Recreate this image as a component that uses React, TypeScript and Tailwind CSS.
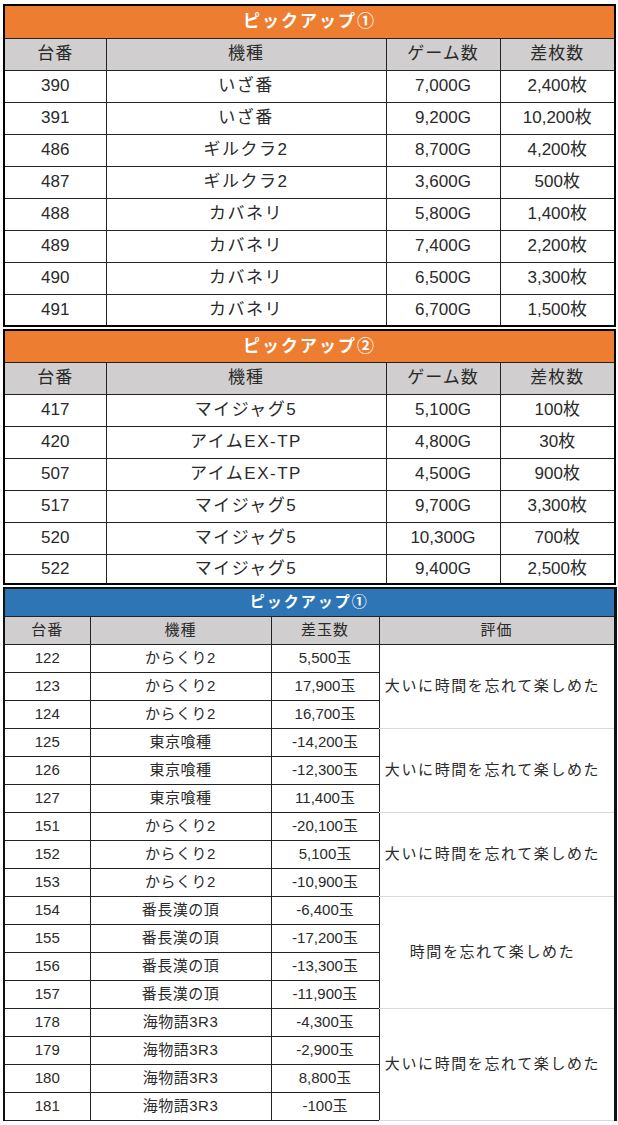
import React from 'react';

const font = { fontFamily: '"Liberation Sans", "Noto Sans CJK JP", sans-serif' };

type SlotRow = [string, string, string, string];

const pick1: SlotRow[] = [
  ['390', 'いざ番', '7,000G', '2,400枚'],
  ['391', 'いざ番', '9,200G', '10,200枚'],
  ['486', 'ギルクラ2', '8,700G', '4,200枚'],
  ['487', 'ギルクラ2', '3,600G', '500枚'],
  ['488', 'カバネリ', '5,800G', '1,400枚'],
  ['489', 'カバネリ', '7,400G', '2,200枚'],
  ['490', 'カバネリ', '6,500G', '3,300枚'],
  ['491', 'カバネリ', '6,700G', '1,500枚'],
];

const pick2: SlotRow[] = [
  ['417', 'マイジャグ5', '5,100G', '100枚'],
  ['420', 'アイムEX-TP', '4,800G', '30枚'],
  ['507', 'アイムEX-TP', '4,500G', '900枚'],
  ['517', 'マイジャグ5', '9,700G', '3,300枚'],
  ['520', 'マイジャグ5', '10,300G', '700枚'],
  ['522', 'マイジャグ5', '9,400G', '2,500枚'],
];

const pachiGroups: { rows: [string, string, string][]; note: string }[] = [
  {
    rows: [
      ['122', 'からくり2', '5,500玉'],
      ['123', 'からくり2', '17,900玉'],
      ['124', 'からくり2', '16,700玉'],
    ],
    note: '大いに時間を忘れて楽しめた',
  },
  {
    rows: [
      ['125', '東京喰種', '-14,200玉'],
      ['126', '東京喰種', '-12,300玉'],
      ['127', '東京喰種', '11,400玉'],
    ],
    note: '大いに時間を忘れて楽しめた',
  },
  {
    rows: [
      ['151', 'からくり2', '-20,100玉'],
      ['152', 'からくり2', '5,100玉'],
      ['153', 'からくり2', '-10,900玉'],
    ],
    note: '大いに時間を忘れて楽しめた',
  },
  {
    rows: [
      ['154', '番長漢の頂', '-6,400玉'],
      ['155', '番長漢の頂', '-17,200玉'],
      ['156', '番長漢の頂', '-13,300玉'],
      ['157', '番長漢の頂', '-11,900玉'],
    ],
    note: '時間を忘れて楽しめた',
  },
  {
    rows: [
      ['178', '海物語3R3', '-4,300玉'],
      ['179', '海物語3R3', '-2,900玉'],
      ['180', '海物語3R3', '8,800玉'],
      ['181', '海物語3R3', '-100玉'],
    ],
    note: '大いに時間を忘れて楽しめた',
  },
];

function SlotTable({
  title,
  rows,
  titleH,
  lastH,
}: {
  title: string;
  rows: SlotRow[];
  titleH: string;
  lastH: string;
}) {
  const cell = 'border border-[#222] text-center p-0';
  return (
    <table className="w-[611px] table-fixed border-collapse border-2 border-black text-[17px] text-[#2a2a2a]">
      <colgroup>
        <col className="w-[102px]" />
        <col className="w-[280px]" />
        <col className="w-[114px]" />
        <col className="w-[115px]" />
      </colgroup>
      <tbody>
        <tr className={titleH + ' bg-[#ED7D31]'}>
          <td colSpan={4} className="border border-[#222] p-0 text-center text-[17px] font-bold tracking-[2px] text-white">
            {title}
          </td>
        </tr>
        <tr className="h-[32px] bg-[#D0CECE]">
          {['台番', '機種', 'ゲーム数', '差枚数'].map((h) => (
            <td key={h} className={cell + ' tracking-[1px]'}>
              {h}
            </td>
          ))}
        </tr>
        {rows.map((r, i) => (
          <tr key={r[0]} className={(i === rows.length - 1 ? lastH : 'h-[32px]') + ' bg-white'}>
            <td className={cell}>{r[0]}</td>
            <td className={cell + ' tracking-[1.5px]'}>{r[1]}</td>
            <td className={cell}>{r[2]}</td>
            <td className={cell}>{r[3]}</td>
          </tr>
        ))}
      </tbody>
    </table>
  );
}

function PachiTable() {
  const cell = 'border border-[#222] text-center p-0';
  return (
    <table className="w-[611px] table-fixed border-collapse border-l-2 border-r-[3px] border-t-2 border-[#111] text-[15px] text-[#2a2a2a]">
      <colgroup>
        <col className="w-[86px]" />
        <col className="w-[181px]" />
        <col className="w-[108px]" />
        <col className="w-[236px]" />
      </colgroup>
      <tbody>
        <tr className="h-[28px] bg-[#2E75B6]">
          <td colSpan={4} className="border border-[#222] p-0 text-center text-[15px] font-bold tracking-[2px] text-white">
            ピックアップ①
          </td>
        </tr>
        <tr className="h-[28px] bg-[#D0CECE]">
          {['台番', '機種', '差玉数', '評価'].map((h) => (
            <td key={h} className={cell + ' tracking-[1px]'}>
              {h}
            </td>
          ))}
        </tr>
        {pachiGroups.map((g) =>
          g.rows.map((r, i) => (
            <tr key={r[0]} className="h-[28px] bg-white">
              <td className={cell}>{r[0]}</td>
              <td className={cell + ' tracking-[0.5px]'}>{r[1]}</td>
              <td className={cell}>{r[2]}</td>
              {i === 0 && (
                <td
                  rowSpan={g.rows.length}
                  className="border-y border-[#d9d9d9] p-0 pr-[8px] text-center tracking-[1.6px]"
                >
                  {g.note}
                </td>
              )}
            </tr>
          )),
        )}
      </tbody>
    </table>
  );
}

export default function App() {
  return (
    <div className="min-h-[1125px] w-[618px] bg-white pl-[3px] pt-[4px]" style={font}>
      <div className="flex flex-col">
        <SlotTable title="ピックアップ①" rows={pick1} titleH="h-[33px]" lastH="h-[32px]" />
        <div className="pt-[2px]">
          <SlotTable title="ピックアップ②" rows={pick2} titleH="h-[32px]" lastH="h-[30px]" />
        </div>
        <div className="pt-[2px]">
          <PachiTable />
        </div>
      </div>
    </div>
  );
}
